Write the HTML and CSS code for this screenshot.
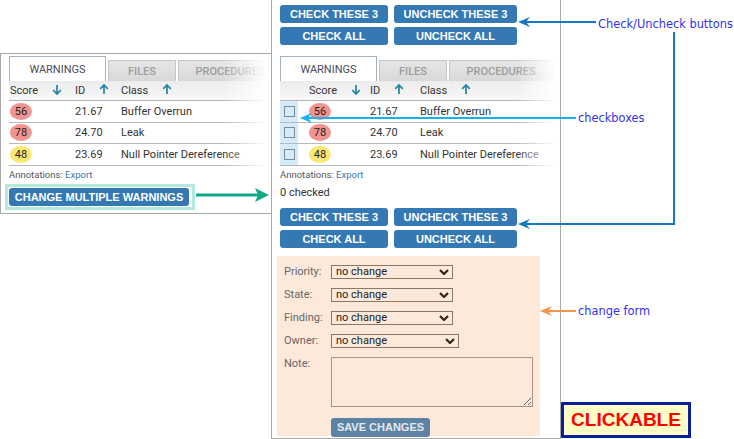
FILE: index.html
```html
<!DOCTYPE html>
<html lang="en">
<head>
  <meta charset="UTF-8">
  <title>Change multiple warnings</title>
  <link rel="stylesheet" href="styles.css">
</head>
<body>
<div class="canvas">

  <!-- before: the normal warnings list -->
  <div class="panel panel-small">
    <div class="tabs">
      <div class="tab active">WARNINGS</div>
      <div class="tab files">FILES</div>
      <div class="tab procs">PROCEDURES</div>
    </div>
    <div class="table table-small">
      <div class="thead cols">
        <div class="score">Score <svg class="sort" viewBox="0 0 10 11"><path d="M5 1v9M1.2 6.2 5 10l3.8-3.8"/></svg></div>
        <div>ID <svg class="sort" viewBox="0 0 10 11"><path d="M5 10V1M1.2 4.8 5 1l3.8 3.8"/></svg></div>
        <div>Class <svg class="sort" viewBox="0 0 10 11"><path d="M5 10V1M1.2 4.8 5 1l3.8 3.8"/></svg></div>
      </div>
      <div class="trow cols"><div class="score"><span class="badge red">56</span></div><div>21.67</div><div>Buffer Overrun</div></div>
      <div class="trow cols"><div class="score"><span class="badge red">78</span></div><div>24.70</div><div>Leak</div></div>
      <div class="trow cols"><div class="score"><span class="badge yellow">48</span></div><div>23.69</div><div>Null Pointer Dereference</div></div>
    </div>
    <div class="annotations">Annotations: <span class="link">Export</span></div>
    <div class="highlight"><button class="btn btn-wide">CHANGE MULTIPLE WARNINGS</button></div>
    <div class="fade fade-small"></div>
  </div>

  <!-- after: checkboxes and change form -->
  <div class="panel panel-big">
    <div class="btn-grid">
      <button class="btn">CHECK THESE 3</button>
      <button class="btn">UNCHECK THESE 3</button>
      <button class="btn">CHECK ALL</button>
      <button class="btn">UNCHECK ALL</button>
    </div>
    <div class="tabs tabs-big">
      <div class="tab active">WARNINGS</div>
      <div class="tab files">FILES</div>
      <div class="tab procs">PROCEDURES</div>
    </div>
    <div class="table table-big">
      <div class="thead cols">
        <div></div>
        <div class="score">Score <svg class="sort" viewBox="0 0 10 11"><path d="M5 1v9M1.2 6.2 5 10l3.8-3.8"/></svg></div>
        <div>ID <svg class="sort" viewBox="0 0 10 11"><path d="M5 10V1M1.2 4.8 5 1l3.8 3.8"/></svg></div>
        <div>Class <svg class="sort" viewBox="0 0 10 11"><path d="M5 10V1M1.2 4.8 5 1l3.8 3.8"/></svg></div>
      </div>
      <div class="trow cols"><div class="check"><span class="box"></span></div><div class="score"><span class="badge red">56</span></div><div>21.67</div><div>Buffer Overrun</div></div>
      <div class="trow cols"><div class="check"><span class="box"></span></div><div class="score"><span class="badge red">78</span></div><div>24.70</div><div>Leak</div></div>
      <div class="trow cols"><div class="check"><span class="box"></span></div><div class="score"><span class="badge yellow">48</span></div><div>23.69</div><div>Null Pointer Dereference</div></div>
    </div>
    <div class="annotations">Annotations: <span class="link">Export</span></div>
    <div class="checked-count">0 checked</div>
    <div class="btn-grid btn-grid-low">
      <button class="btn">CHECK THESE 3</button>
      <button class="btn">UNCHECK THESE 3</button>
      <button class="btn">CHECK ALL</button>
      <button class="btn">UNCHECK ALL</button>
    </div>
    <div class="change-form">
      <label>Priority:</label>
      <div class="select"><span>no change</span><svg viewBox="0 0 10 6"><path d="M1 1l4 4 4-4"/></svg></div>
      <label>State:</label>
      <div class="select"><span>no change</span><svg viewBox="0 0 10 6"><path d="M1 1l4 4 4-4"/></svg></div>
      <label>Finding:</label>
      <div class="select"><span>no change</span><svg viewBox="0 0 10 6"><path d="M1 1l4 4 4-4"/></svg></div>
      <label>Owner:</label>
      <div class="select select-wide"><span>no change</span><svg viewBox="0 0 10 6"><path d="M1 1l4 4 4-4"/></svg></div>
      <label>Note:</label>
      <textarea class="note"></textarea>
      <button class="btn btn-save">SAVE CHANGES</button>
    </div>
    <div class="fade fade-big"></div>
  </div>

  <div class="callout callout-buttons">Check/Uncheck buttons</div>
  <div class="callout callout-boxes">checkboxes</div>
  <div class="callout callout-form">change form</div>

  <svg class="arrows" width="734" height="439" viewBox="0 0 734 439">
    <g fill="none" stroke-width="2">
      <path d="M526 22H596" stroke="#1479c0"/>
      <path d="M674 32V224H526" stroke="#1479c0"/>
      <path d="M308 118H576" stroke="#16b2ef"/>
      <path d="M548 311H576" stroke="#f4954a"/>
      <path d="M196 195H259" stroke="#11a98a" stroke-width="3"/>
    </g>
    <polygon points="518,22 530,17 526,22 530,27" fill="#1479c0"/>
    <polygon points="518,224 530,219 526,224 530,229" fill="#1479c0"/>
    <polygon points="300,118 312,113 308,118 312,123" fill="#16b2ef"/>
    <polygon points="540,311 552,306 548,311 552,316" fill="#f4954a"/>
    <polygon points="269,195 255,188 258,195 255,202" fill="#11a98a"/>
  </svg>

  <div class="clickable">CLICKABLE</div>
</div>
</body>
</html>
```

FILE: styles.css
```css
* {
  box-sizing: border-box;
}

body {
  margin: 0;
  background: #fff;
  font-family: Roboto, "Liberation Sans", sans-serif;
  color: #333;
}

.canvas {
  position: relative;
  width: 734px;
  height: 439px;
  overflow: hidden;
}

/* screenshots of the two states */
.panel {
  position: absolute;
  background: #fff;
  border: 1px solid #a9a9a9;
  overflow: hidden;
  padding-left: 8px;
}

.panel-small {
  left: 0;
  top: 53px;
  width: 272px;
  height: 161px;
  padding-top: 2px;
  z-index: 2;
}

.panel-big {
  left: 271px;
  top: -1px;
  width: 290px;
  height: 440px;
  padding-top: 5px;
}

/* tabs */
.tabs {
  display: flex;
  align-items: flex-end;
  gap: 2px;
  height: 25px;
}

.tabs-big {
  margin-top: 11px;
}

.tab {
  flex: none;
  height: 21px;
  display: flex;
  align-items: center;
  justify-content: center;
  border: 1px solid #c6c6c6;
  border-bottom: 0;
  background: linear-gradient(#e6e6e6, #d8d8d8);
  color: #9c9c9c;
  font-size: 11px;
  font-weight: 500;
}

.tab.active {
  width: 97px;
  height: 25px;
  background: #fff;
  border-color: #a3b2bb;
  color: #4b4b5b;
  font-weight: 400;
}

.tab.files {
  width: 68px;
}

.tab.procs {
  width: 104px;
}

/* table */
.table-small {
  width: 300px;
}

.table-big {
  width: 280px;
}

.thead {
  height: 20px;
  align-items: center;
  background: linear-gradient(#ececec, #f7f7f7);
  border-bottom: 1px solid #b4b4b4;
  font-size: 11px;
}

.trow {
  height: 21.5px;
  align-items: center;
  border-bottom: 1px solid #b9b9b9;
  font-size: 11px;
  color: #333;
}

.cols {
  display: grid;
}

.table-small .cols {
  grid-template-columns: 66px 46px 1fr;
}

.table-small .score {
  padding-left: 1px;
}

.table-big .cols {
  grid-template-columns: 18px 72px 50px 1fr;
}

.table-big .score {
  padding-left: 11px;
}

.sort {
  width: 10px;
  height: 11px;
  margin-left: 11px;
  vertical-align: -1px;
  fill: none;
  stroke: #1f87a3;
  stroke-width: 1.7;
}

.badge {
  display: inline-flex;
  align-items: center;
  justify-content: center;
  width: 22px;
  height: 17px;
  border-radius: 50%;
  font-size: 11px;
  color: #222;
}

.badge.red {
  background: #f19490;
}

.badge.yellow {
  background: #fbe873;
}

.check {
  height: 100%;
  background: #d4ebf9;
  display: flex;
  align-items: center;
  padding-left: 4px;
}

.box {
  width: 11px;
  height: 11px;
  border: 1px solid #7e8c96;
}

.annotations {
  margin-top: 3px;
  font-size: 9.5px;
  line-height: 12px;
  color: #555;
}

.link {
  color: #3a78b0;
}

.checked-count {
  margin-top: 5px;
  font-size: 11px;
  line-height: 14px;
  color: #333;
}

/* buttons */
.btn {
  height: 18px;
  padding: 0;
  border: 0;
  border-radius: 3px;
  background: #3478b4;
  color: #fff;
  font: bold 11px "Liberation Sans", Arial, sans-serif;
}

.btn-grid {
  display: grid;
  grid-template-columns: 108px 123px;
  gap: 4px 6px;
}

.btn-grid-low {
  margin-top: 8px;
}

.highlight {
  display: inline-block;
  margin: 3px 0 0 -4px;
  border: 3px solid #b4e8de;
  padding: 1px 3px 1px 1px;
}

.btn-wide {
  display: block;
  width: 180px;
}

/* change form */
.change-form {
  display: grid;
  grid-template-columns: 47px auto;
  justify-content: start;
  align-items: start;
  row-gap: 9px;
  width: 263px;
  height: 180px;
  margin: 8px 0 0 -3px;
  padding: 9px 0 0 7px;
  background: #fde9da;
}

.change-form label {
  font-size: 11px;
  line-height: 14px;
  color: #666;
}

.select {
  display: flex;
  align-items: center;
  justify-content: space-between;
  width: 122px;
  height: 14px;
  padding: 0 3px 0 4px;
  border: 1px solid #8c7764;
  font-size: 11px;
  color: #222;
}

.select-wide {
  width: 128px;
}

.select svg {
  width: 10px;
  height: 6px;
  fill: none;
  stroke: #33261c;
  stroke-width: 2.2;
}

.note {
  display: block;
  width: 202px;
  height: 50px;
  margin: 0;
  border: 1px solid #a8968a;
  background: transparent;
  resize: both;
}

.btn-save {
  grid-column: 2;
  width: 99px;
  height: 19px;
  margin-top: 2px;
  background: #5c83a3;
  color: #e4e9f0;
}

/* right-edge fade of the cropped table */
.fade {
  position: absolute;
  right: 0;
  width: 48px;
  background: linear-gradient(to right, rgba(255, 255, 255, 0), #fff 90%);
}

.fade-small {
  top: 2px;
  height: 112px;
}

.fade-big {
  top: 56px;
  height: 110px;
  width: 44px;
}

/* callouts */
.callout {
  position: absolute;
  font-family: "DejaVu Sans", sans-serif;
  font-size: 11.4px;
  line-height: 14px;
  color: #3232ee;
  white-space: nowrap;
}

.callout-buttons {
  left: 598px;
  top: 17px;
}

.callout-boxes {
  left: 578px;
  top: 111px;
}

.callout-form {
  left: 578px;
  top: 304px;
}

.arrows {
  position: absolute;
  left: 0;
  top: 0;
  z-index: 3;
  pointer-events: none;
}

.clickable {
  position: absolute;
  left: 561px;
  top: 402px;
  width: 130px;
  height: 36px;
  display: flex;
  align-items: center;
  justify-content: center;
  border: 3px solid #0a1f9a;
  background: #ffffc6;
  color: #f00;
  font: bold 19px "Liberation Sans", Arial, sans-serif;
}
```
